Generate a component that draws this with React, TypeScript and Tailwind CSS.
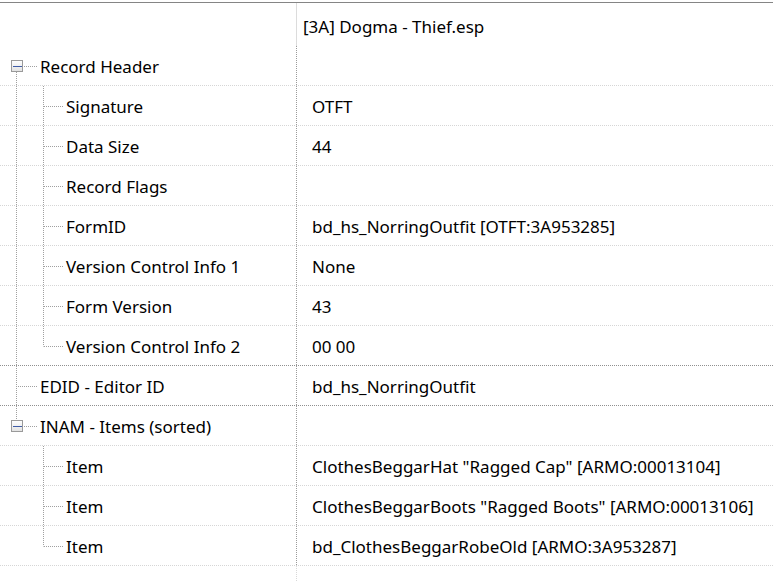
import React from "react";

type Row = {
  label: string;
  value: string;
  depth: 0 | 1;
  expander?: boolean;
  // guide flags
  rootAbove?: boolean; // root vertical continues from above
  rootBelow?: boolean; // root vertical continues below
  childLast?: boolean;
  strong?: boolean; // darker separator below
};

const rows: Row[] = [
  { label: "Record Header", value: "", depth: 0, expander: true, rootBelow: true },
  { label: "Signature", value: "OTFT", depth: 1, rootAbove: true, rootBelow: true },
  { label: "Data Size", value: "44", depth: 1, rootAbove: true, rootBelow: true },
  { label: "Record Flags", value: "", depth: 1, rootAbove: true, rootBelow: true },
  { label: "FormID", value: "bd_hs_NorringOutfit [OTFT:3A953285]", depth: 1, rootAbove: true, rootBelow: true },
  { label: "Version Control Info 1", value: "None", depth: 1, rootAbove: true, rootBelow: true },
  { label: "Form Version", value: "43", depth: 1, rootAbove: true, rootBelow: true },
  { label: "Version Control Info 2", value: "00 00", depth: 1, rootAbove: true, rootBelow: true, childLast: true, strong: true },
  { label: "EDID - Editor ID", value: "bd_hs_NorringOutfit", depth: 0, rootAbove: true, rootBelow: true, strong: true },
  { label: "INAM - Items (sorted)", value: "", depth: 0, expander: true, rootAbove: true },
  { label: "Item", value: 'ClothesBeggarHat "Ragged Cap" [ARMO:00013104]', depth: 1 },
  { label: "Item", value: 'ClothesBeggarBoots "Ragged Boots" [ARMO:00013106]', depth: 1 },
  { label: "Item", value: "bd_ClothesBeggarRobeOld [ARMO:3A953287]", depth: 1, childLast: true },
];

const DOT = "#a0a0a0";

function Guides({ row }: { row: Row }) {
  const w = row.depth === 0 ? 38 : 64;
  const h = 39;
  const mid = 20.5;
  const lines: React.ReactNode[] = [];
  // root level vertical at x=16
  if (row.depth === 1) {
    if (row.rootAbove || row.rootBelow)
      lines.push(<line key="rv" x1={16.5} y1={0} x2={16.5} y2={h} />);
    // child vertical at x=43
    lines.push(<line key="cv" x1={43.5} y1={0} x2={43.5} y2={row.childLast ? mid : h} />);
    lines.push(<line key="ch" x1={44} y1={mid} x2={63} y2={mid} />);
  } else if (row.expander) {
    if (row.rootAbove) lines.push(<line key="ra" x1={16.5} y1={0} x2={16.5} y2={14} />);
    if (row.rootBelow) lines.push(<line key="rb" x1={16.5} y1={26} x2={16.5} y2={h} />);
    lines.push(<line key="rh" x1={24} y1={mid} x2={37} y2={mid} />);
  } else {
    lines.push(<line key="rv" x1={16.5} y1={0} x2={16.5} y2={row.rootBelow ? h : mid} />);
    lines.push(<line key="rh" x1={18} y1={mid} x2={37} y2={mid} />);
  }
  return (
    <svg width={w} height={h} className="shrink-0 block">
      <defs>
        <linearGradient id="exp" x1="0" y1="0" x2="0" y2="1">
          <stop offset="0" stopColor="#ffffff" />
          <stop offset="1" stopColor="#e2e2e2" />
        </linearGradient>
      </defs>
      <g stroke={DOT} strokeWidth={1} strokeDasharray="1 1" fill="none">
        {lines}
      </g>
      {row.expander && (
        <g>
          <rect x={11.5} y={14.5} width={11} height={11} fill="url(#exp)" stroke="#9a9a9a" />
          <line x1={13} y1={20.5} x2={22} y2={20.5} stroke="#3f5ca6" strokeWidth={1} />
        </g>
      )}
    </svg>
  );
}

export default function App() {
  return (
    <div
      className="w-[773px] h-[581px] bg-white overflow-hidden flex flex-col text-[17px] leading-[20px] text-black"
      style={{ fontFamily: '"Noto Sans", "Open Sans", sans-serif' }}
    >
      <div className="h-[2px] shrink-0" />
      <div className="h-px shrink-0 bg-[#858585]" />
      {/* column header */}
      <div className="grid grid-cols-[296px_1fr] h-[43px] shrink-0">
        <div />
        <div className="border-l border-[#dcdcdc] pl-[6px] flex items-center pt-[4px] whitespace-nowrap">
          [3A] Dogma - Thief.esp
        </div>
      </div>
      {rows.map((row, i) => (
        <div
          key={i}
          className={`grid grid-cols-[296px_1fr] h-[40px] shrink-0 border-b border-dotted ${
            row.strong ? "border-[#909090]" : "border-[#d6d6d6]"
          }`}
        >
          <div className="flex items-center whitespace-nowrap">
            <Guides row={row} />
            <span className="pl-[2px] pt-[2px]">{row.label}</span>
          </div>
          <div className="border-l border-dotted border-[#9a9a9a] pl-[15px] pt-[2px] flex items-center whitespace-nowrap">
            {row.value}
          </div>
        </div>
      ))}
      <div className="grid grid-cols-[296px_1fr] flex-1">
        <div />
        <div className="border-l border-dotted border-[#d8d8d8]" />
      </div>
    </div>
  );
}
